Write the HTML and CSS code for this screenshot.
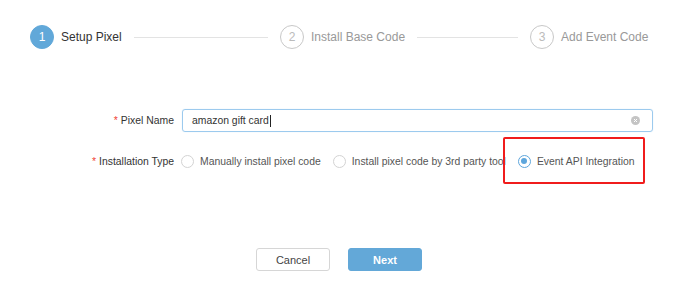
FILE: index.html
```html
<!DOCTYPE html>
<html>
<head>
<meta charset="utf-8">
<link rel="stylesheet" href="styles.css">
</head>
<body>
<div class="steps">
  <div class="step active">
    <span class="num">1</span><span class="label">Setup Pixel</span><span class="line"></span>
  </div>
  <div class="step">
    <span class="num">2</span><span class="label">Install Base Code</span><span class="line"></span>
  </div>
  <div class="step last">
    <span class="num">3</span><span class="label">Add Event Code</span>
  </div>
</div>

<div class="form">
  <div class="row row-name">
    <div class="lbl"><span class="req">*</span>Pixel Name</div>
    <div class="input">
      <span class="val">amazon gift card</span><span class="caret"></span>
      <span class="clear"><svg width="9" height="9" viewBox="0 0 9 9"><circle cx="4.5" cy="4.5" r="4.5" fill="#c4c4c4"/><path d="M3 3L6 6M6 3L3 6" stroke="#fff" stroke-width="1"/></svg></span>
    </div>
  </div>
  <div class="row row-type">
    <div class="lbl"><span class="req">*</span>Installation Type</div>
    <div class="radios">
      <span class="radio"><span class="dot"></span>Manually install pixel code</span>
      <span class="radio"><span class="dot"></span>Install pixel code by 3rd party tool</span>
      <span class="radio checked"><span class="dot"></span>Event API Integration</span>
    </div>
    <div class="highlight"></div>
  </div>
</div>

<div class="buttons">
  <button class="btn cancel">Cancel</button>
  <button class="btn next">Next</button>
</div>
</body>
</html>
```

FILE: styles.css
```css
* { box-sizing: border-box; }
html, body { margin: 0; padding: 0; background: #fff; }
body {
  width: 693px;
  height: 292px;
  font-family: "Liberation Sans", Arial, sans-serif;
  color: #333;
  position: relative;
}
.steps {
  display: flex;
  padding: 25px 0 0 30px;
}
.step {
  width: 250px;
  display: flex;
  align-items: center;
  height: 24px;
}
.step.last { width: auto; }
.num {
  width: 24px;
  height: 24px;
  border-radius: 50%;
  border: 1px solid #c8c8c8;
  color: #bbb;
  font-size: 12px;
  display: flex;
  align-items: center;
  justify-content: center;
  flex: none;
}
.step.active .num {
  background: #61a8d9;
  border-color: #61a8d9;
  color: #fff;
}
.label {
  margin-left: 7px;
  font-size: 12px;
  color: #999;
  white-space: nowrap;
}
.step.active .label { color: #333; }
.line {
  flex: 1;
  height: 1px;
  background: #e3e3e3;
  margin: 0 12px;
}
.form {
  margin-top: 60px;
  font-size: 10.4px;
}
.row {
  display: flex;
  align-items: center;
  position: relative;
}
.lbl {
  width: 174px;
  text-align: right;
  color: #333;
  flex: none;
}
.req { color: #f04134; margin-right: 3px; }
.input {
  margin-left: 8px;
  width: 471px;
  height: 23px;
  border: 1px solid #9ccaee;
  border-radius: 3px;
  display: flex;
  align-items: center;
  padding-left: 9px;
  position: relative;
  box-shadow: 0 0 1px rgba(120,180,230,0.4);
}
.val { color: #333; }
.caret { width: 1px; height: 12px; background: #222; margin-left: 1px; }
.clear {
  position: absolute;
  right: 12px;
  top: 6px;
  height: 9px;
  display: flex;
}
.row-type { margin-top: 17px; height: 24px; }
.radios {
  display: flex;
  align-items: center;
  margin-left: 7px;
}
.radio {
  display: flex;
  align-items: center;
  margin-right: 12px;
  color: #555;
  white-space: nowrap;
}
.dot {
  width: 13px;
  height: 13px;
  border-radius: 50%;
  border: 1px solid #d3d3d3;
  margin-right: 6px;
  position: relative;
  flex: none;
}
.radio.checked .dot { border-color: #5ea6dc; }
.radio.checked .dot::after {
  content: "";
  position: absolute;
  left: 2.5px; top: 2.5px;
  width: 6px; height: 6px;
  border-radius: 50%;
  background: #5ea6dc;
}
.highlight {
  position: absolute;
  left: 503px;
  top: -12px;
  width: 142px;
  height: 47px;
  border: 2px solid #f01c1c;
  border-radius: 2px;
}
.buttons {
  display: flex;
  gap: 18px;
  margin: 75px 0 0 256px;
}
.btn {
  width: 74px;
  height: 23px;
  border-radius: 3px;
  font-family: "Liberation Sans", Arial, sans-serif;
  font-size: 11px;
  padding: 0;
}
.cancel { background: #fff; border: 1px solid #d6d6d6; color: #444; }
.next { background: #63a8d8; border: 1px solid #63a8d8; color: #fff; font-weight: bold; }
```
